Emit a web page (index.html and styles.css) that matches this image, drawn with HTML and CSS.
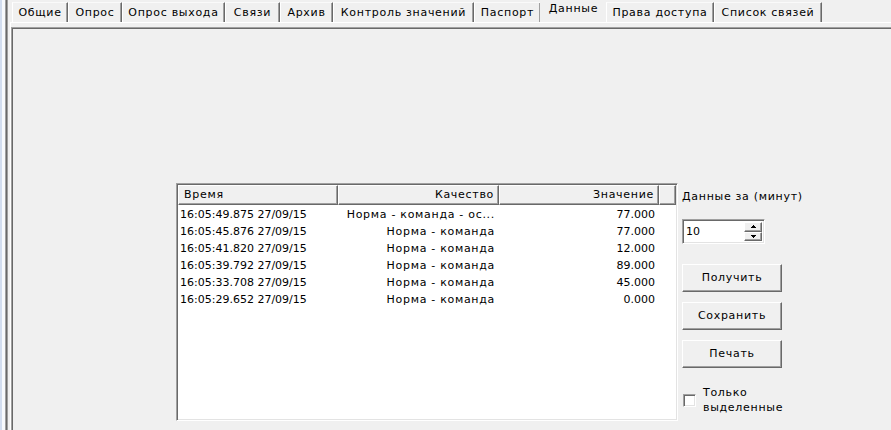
FILE: index.html
```html
<!DOCTYPE html>
<html lang="ru">
<head>
<meta charset="utf-8">
<title>Данные</title>
<link rel="stylesheet" href="styles.css">
</head>
<body>
<div class="window">
  <div class="edge"></div>
  <div class="tabctl">
    <div class="tabs">
      <div class="tab w1">Общие</div>
      <div class="tab w2">Опрос</div>
      <div class="tab w3">Опрос выхода</div>
      <div class="tab w4">Связи</div>
      <div class="tab w5">Архив</div>
      <div class="tab w6">Контроль значений</div>
      <div class="tab w7">Паспорт</div>
      <div class="tab sel w8">Данные</div>
      <div class="tab w9">Права доступа</div>
      <div class="tab w10">Список связей</div>
    </div>
    <div class="panel">
      <div class="inner">
        <div class="listbox">
          <div class="header">
            <div class="hcell c-time">Время</div>
            <div class="hcell c-q">Качество</div>
            <div class="hcell c-v">Значение</div>
            <div class="hcell c-rest"></div>
          </div>
          <div class="rows">
            <div class="row"><span class="c-time">16:05:49.875 27/09/15</span><span class="c-q">Норма - команда - ос...</span><span class="c-v">77.000</span></div>
            <div class="row"><span class="c-time">16:05:45.876 27/09/15</span><span class="c-q">Норма - команда</span><span class="c-v">77.000</span></div>
            <div class="row"><span class="c-time">16:05:41.820 27/09/15</span><span class="c-q">Норма - команда</span><span class="c-v">12.000</span></div>
            <div class="row"><span class="c-time">16:05:39.792 27/09/15</span><span class="c-q">Норма - команда</span><span class="c-v">89.000</span></div>
            <div class="row"><span class="c-time">16:05:33.708 27/09/15</span><span class="c-q">Норма - команда</span><span class="c-v">45.000</span></div>
            <div class="row"><span class="c-time">16:05:29.652 27/09/15</span><span class="c-q">Норма - команда</span><span class="c-v">0.000</span></div>
          </div>
        </div>
        <div class="side">
          <div class="label">Данные за (минут)</div>
          <div class="spin">
            <div class="spin-val">10</div>
            <div class="spin-btns">
              <div class="sb"><svg width="5" height="3" viewBox="0 0 5 3"><path d="M2 0h1v1h1v1h1v1H0V2h1V1h1z" fill="#000"/></svg></div>
              <div class="sb"><svg width="5" height="3" viewBox="0 0 5 3"><path d="M0 0h5v1H4v1H3v1H2V2H1V1H0z" fill="#000"/></svg></div>
            </div>
          </div>
          <div class="btn b1">Получить</div>
          <div class="btn">Сохранить</div>
          <div class="btn">Печать</div>
          <div class="check">
            <div class="box"></div>
            <div class="check-label">Только<br>выделенные</div>
          </div>
        </div>
      </div>
    </div>
  </div>
</div>
</body>
</html>
```
FILE: styles.css
```css
* { box-sizing: border-box; }
html, body { margin: 0; padding: 0; }
body {
  background: #f0f0f0;
  font-family: "DejaVu Sans", "Liberation Sans", sans-serif;
  font-size: 11px;
  letter-spacing: 0.7px;
  color: #000;
  width: 891px;
  height: 430px;
  overflow: hidden;
}
.window {
  display: flex;
  height: 430px;
}
.edge {
  width: 10px;
  flex: none;
  background: linear-gradient(to right,
    #d2ddef 0, #d2ddef 2px,
    #f7f9fc 2px, #f7f9fc 5px,
    #a0a0a0 5px, #a0a0a0 6px,
    #696969 6px, #696969 7px,
    #a0a0a0 7px, #a0a0a0 8px,
    #f0f0f0 8px);
}
.tabctl {
  flex: 1;
  display: flex;
  flex-direction: column;
}
.tabs {
  height: 22px;
  display: flex;
  padding-left: 2px;
  align-items: flex-end;
}
.tab {
  height: 20px;
  line-height: 19px;
  text-align: center;
  white-space: nowrap;
  border-left: 1px solid #fff;
  border-top: 1px solid #fafafa;
  border-right: 1px solid #696969;
  box-shadow: inset -1px 0 0 #a0a0a0;
  background: #f0f0f0;
}
.tab.sel {
  height: 22px;
  line-height: 18px;
  border: none;
  box-shadow: none;
  margin: 0 -1px;
  padding-bottom: 4px;
}
.w1 { width: 56px; }
.w2 { width: 54px; }
.w3 { width: 103px; }
.w4 { width: 55px; }
.w5 { width: 53px; }
.w6 { width: 141px; }
.w7 { width: 67px; }
.w8 { width: 67px; }
.w9 { width: 108px; }
.w10 { width: 108px; }
.panel {
  flex: 1;
  border-top: 1px solid #fff;
  border-left: 1px solid #fff;
  padding-top: 4px;
}
.inner {
  height: 100%;
  border-top: 1px solid #a0a0a0;
  border-left: 1px solid #a0a0a0;
  box-shadow: inset 1px 1px 0 #696969;
  display: flex;
  padding: 155px 0 0 164px;
  align-items: flex-start;
}
.listbox {
  width: 502px;
  height: 238px;
  background: #fff;
  border-top: 1px solid #a0a0a0;
  border-left: 1px solid #a0a0a0;
  border-right: 1px solid #fff;
  border-bottom: 1px solid #fff;
  box-shadow: inset 1px 1px 0 #696969, inset -1px -1px 0 #e3e3e3;
  padding: 1px 0 0 1px;
  flex: none;
}
.header {
  display: flex;
  height: 20px;
}
.hcell {
  height: 20px;
  line-height: 18px;
  background: #f0f0f0;
  border-top: 1px solid #fff;
  border-left: 1px solid #fff;
  border-right: 1px solid #696969;
  border-bottom: 1px solid #696969;
  box-shadow: inset -1px -1px 0 #a0a0a0;
  white-space: nowrap;
  overflow: hidden;
}
.header .c-time { width: 160px; padding-left: 5px; text-align: left; }
.header .c-q { width: 161px; padding-right: 4px; text-align: right; }
.header .c-v { width: 160px; padding-right: 4px; text-align: right; }
.header .c-rest { width: 17px; }
.rows { padding-top: 1px; }
.row {
  display: flex;
  height: 17px;
  line-height: 17px;
  white-space: nowrap;
}
.row .c-time { width: 160px; padding-left: 2px; letter-spacing: 0; }
.row .c-q { width: 161px; padding-right: 4px; text-align: right; }
.row .c-v { width: 160px; padding-right: 4px; text-align: right; letter-spacing: 0; }
.side {
  margin-left: 4px;
  display: flex;
  flex-direction: column;
  width: 130px;
}
.label {
  margin-top: 6px;
  height: 16px;
  line-height: 16px;
  white-space: nowrap;
}
.spin {
  margin-top: 14px;
  width: 83px;
  height: 25px;
  background: #fff;
  border-top: 1px solid #a0a0a0;
  border-left: 1px solid #a0a0a0;
  border-right: 1px solid #fff;
  border-bottom: 1px solid #fff;
  box-shadow: inset 1px 1px 0 #696969, inset -1px -1px 0 #e3e3e3;
  display: flex;
  justify-content: space-between;
  padding: 2px 2px 2px 2px;
}
.spin-val {
  line-height: 19px;
  padding-left: 1px;
  letter-spacing: 0;
}
.spin-btns {
  width: 18px;
  display: flex;
  flex-direction: column;
}
.sb {
  flex: 1;
  background: #f0f0f0;
  border-top: 1px solid #fff;
  border-left: 1px solid #fff;
  border-right: 1px solid #696969;
  border-bottom: 1px solid #696969;
  box-shadow: inset -1px -1px 0 #a0a0a0;
  display: flex;
  align-items: center;
  justify-content: center;
}
.btn {
  width: 100px;
  height: 28px;
  line-height: 26px;
  text-align: center;
  background: #f0f0f0;
  border-top: 1px solid #fff;
  border-left: 1px solid #fff;
  border-right: 1px solid #696969;
  border-bottom: 1px solid #696969;
  box-shadow: inset -1px -1px 0 #a0a0a0;
  margin-top: 10px;
}
.btn.b1 { margin-top: 20px; }
.check {
  margin-top: 17px;
  display: flex;
  align-items: flex-start;
}
.box {
  margin-top: 9px;
  margin-left: 1px;
  width: 13px;
  height: 13px;
  background: #fff;
  border-top: 1px solid #a0a0a0;
  border-left: 1px solid #a0a0a0;
  border-right: 1px solid #fff;
  border-bottom: 1px solid #fff;
  box-shadow: inset 1px 1px 0 #696969, inset -1px -1px 0 #e3e3e3;
}
.check-label {
  margin-left: 7px;
  line-height: 15px;
}
```
